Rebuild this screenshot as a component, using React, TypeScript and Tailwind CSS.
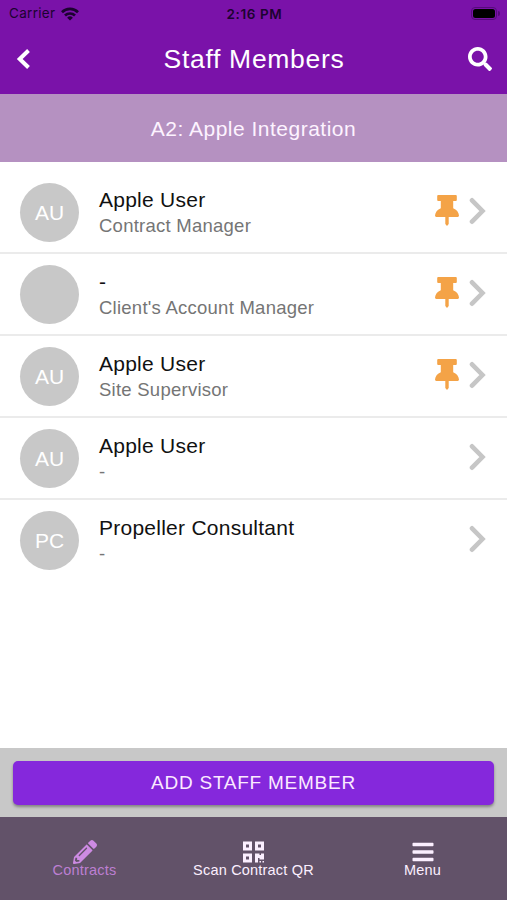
import { FaBars, FaPencilAlt, FaSearch } from 'react-icons/fa';

type Member = { initials: string; name: string; role: string; pinned: boolean };

const members: Member[] = [
  { initials: 'AU', name: 'Apple User', role: 'Contract Manager', pinned: true },
  { initials: '', name: '-', role: "Client's Account Manager", pinned: true },
  { initials: 'AU', name: 'Apple User', role: 'Site Supervisor', pinned: true },
  { initials: 'AU', name: 'Apple User', role: '-', pinned: false },
  { initials: 'PC', name: 'Propeller Consultant', role: '-', pinned: false },
];

function WifiIcon() {
  return (
    <svg className="h-[14px] w-[18px]" viewBox="0 0 18 14" fill="none" stroke="currentColor" strokeWidth="2.7">
      <path d="M1 5.2a11.4 11.4 0 0 1 16 0" />
      <path d="M4 8.5a7.2 7.2 0 0 1 10 0" />
      <path d="M9 13.6 6.1 10.7a4.1 4.1 0 0 1 5.8 0Z" fill="currentColor" stroke="none" />
    </svg>
  );
}

function PinIcon() {
  return (
    <svg className="mr-[10px] mb-[3px] h-[31px] w-[24px]" viewBox="0 0 24 31" fill="#f4a347">
      <path d="M3.2 0h17.6q1 0 1 1v4q0 1-1 1h-2.6v7.2c3.2 1.4 5.6 3.8 5.8 7.4q0 1.4-1.3 1.4h-9v7L12 31l-1.700-2V22h-9Q0 22 0 20.600c.2-3.600 2.600-6 5.800-7.400V6H3.200q-1 0-1-1V1q0-1 1-1Z" />
    </svg>
  );
}

function QrIcon() {
  return (
    <svg className="h-[24px] w-[21px]" viewBox="0 0 21 24" fill="currentColor">
      <path
        fillRule="evenodd"
        d="M0 1.500h9v9H0zM3 4.500v3h3v-3zM12 1.500h9v9h-9zM15 4.500v3h3v-3zM0 13.500h9v9H0zM3 16.500v3h3v-3zM12 13.500h4.500v1.500H18v-1.500h3v6h-4.500V18H15v4.500h-3zM16.500 21H18v1.500h-1.500zM19.500 21H21v1.500h-1.500z"
      />
    </svg>
  );
}

function StatusBar() {
  return (
    <div className="grid h-[27px] grid-cols-3 items-center pr-[7px] pl-[9px] font-['Inter',sans-serif] text-[#1c0330]">
      <div className="flex items-center gap-[6px]">
        <span className="text-[13.5px] tracking-[0.3px]">Carrier</span>
        <WifiIcon />
      </div>
      <div className="pt-px text-center text-[13.5px] font-semibold tracking-[0.6px]">2:16 PM</div>
      <div className="flex items-center justify-end gap-px">
        <div className="h-[13px] w-[26px] rounded-[4px] border border-[#560b7c] p-px">
          <div className="h-full w-full rounded-[2.5px] bg-black" />
        </div>
        <div className="h-[5px] w-[2px] rounded-r-full bg-[#560b7c]" />
      </div>
    </div>
  );
}

function MemberRow({ member, last }: { member: Member; last: boolean }) {
  return (
    <li className={`flex h-[82px] items-center border-b-2 pr-[20px] pl-[20px] ${last ? 'border-transparent' : 'border-[#ebebeb]'}`}>
      <div className="flex size-[59px] shrink-0 items-center justify-center rounded-full bg-[#c8c8c8] pt-[2px] text-[21px] text-white">
        {member.initials}
      </div>
      <div className="ml-[20px] flex-1">
        <div className="text-[21px] leading-[26px] tracking-[0.25px] text-[#111]">{member.name}</div>
        <div className="text-[18.5px] leading-[25px] tracking-[0.25px] text-[#757575]">{member.role}</div>
      </div>
      {member.pinned && <PinIcon />}
      <svg className="mr-px mb-[3px] h-[28px] w-[17px]" viewBox="0 0 17 28" fill="none" stroke="#c6c6c6" strokeWidth="4.6" strokeLinecap="round">
        <path d="M3 3.300 13.500 14 3 24.700" />
      </svg>
    </li>
  );
}

export default function App() {
  return (
    <div className="flex h-[900px] w-[507px] flex-col overflow-hidden bg-white font-['Liberation_Sans',Arial,sans-serif]">
      <header className="h-[94px] shrink-0 bg-[#7a12a9]">
        <StatusBar />
        <div className="grid h-[64px] grid-cols-[60px_1fr_60px] items-center pr-[15px] pl-[16px] text-white">
          <svg className="h-[22px] w-[15px]" viewBox="0 0 15 22" fill="none" stroke="currentColor" strokeWidth="4">
            <path d="M12.500 2.500 3.700 11l8.800 8.500" />
          </svg>
          <h1 className="pt-[2px] text-center text-[26.5px] tracking-[0.7px]">Staff Members</h1>
          <FaSearch className="size-[24px] justify-self-end" />
        </div>
      </header>
      <div className="flex h-[68px] shrink-0 items-center justify-center bg-[#b591c1] pt-[2px] text-[21px] tracking-[0.5px] text-[#fdf3ff]">
        A2: Apple Integration
      </div>
      <ul className="flex-1 pt-[10px]">
        {members.map((member, index) => (
          <MemberRow key={index} member={member} last={index === members.length - 1} />
        ))}
      </ul>
      <div className="h-[69px] shrink-0 bg-[#c8c8c8] px-[13px] pt-[13px]">
        <button className="h-[44px] w-full rounded-[5px] bg-[#8528dc] text-[19px] tracking-[0.75px] text-[#fbeaff] shadow-[0_2px_3px_rgba(0,0,0,0.35)]">
          ADD STAFF MEMBER
        </button>
      </div>
      <nav className="grid h-[83px] shrink-0 grid-cols-3 bg-[#625269] pt-[23px] text-[14.5px] leading-[16px] tracking-[0.2px] text-[#fbefff]">
        <div className="flex flex-col items-center -space-y-[2px] text-[#bd7fd2]">
          <FaPencilAlt className="size-[24px] text-[#cd8be3]" />
          <span>Contracts</span>
        </div>
        <div className="flex flex-col items-center -space-y-[2px]">
          <QrIcon />
          <span>Scan Contract QR</span>
        </div>
        <div className="flex flex-col items-center -space-y-[2px]">
          <FaBars className="size-[24px]" />
          <span>Menu</span>
        </div>
      </nav>
    </div>
  );
}
